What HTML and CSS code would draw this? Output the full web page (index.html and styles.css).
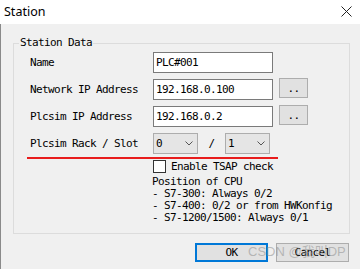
FILE: index.html
```html
<!DOCTYPE html>
<html lang="en">
<head>
  <meta charset="UTF-8">
  <title>Station</title>
  <link rel="stylesheet" href="styles.css">
</head>
<body>

  <!-- Window title bar -->
  <div class="titlebar">
    <span class="title">Station</span>
    <svg class="close" width="11" height="11" viewBox="0 0 11 11">
      <path d="M0.5 0.5 L10.5 10.5 M10.5 0.5 L0.5 10.5" stroke="#222" stroke-width="1" fill="none"/>
    </svg>
  </div>

  <!-- Dialog body -->
  <div class="dialog">
    <div class="group">
      <span class="legend">Station Data</span>

      <div class="form">
        <div class="label">Name</div>
        <div class="field">PLC#001</div>
        <div></div>

        <div class="label">Network IP Address</div>
        <div class="field">192.168.0.100</div>
        <div class="btn small">..</div>

        <div class="label">Plcsim IP Address</div>
        <div class="field">192.168.0.2</div>
        <div class="btn small">..</div>

        <div class="label">Plcsim Rack / Slot</div>
        <div class="rack">
          <div class="combo"><span>0</span><svg width="8" height="5" viewBox="0 0 8 5"><path d="M0.5 0.5 L4 4 L7.5 0.5" stroke="#555" fill="none"/></svg></div>
          <span class="slash">/</span>
          <div class="combo"><span>1</span><svg width="8" height="5" viewBox="0 0 8 5"><path d="M0.5 0.5 L4 4 L7.5 0.5" stroke="#555" fill="none"/></svg></div>
        </div>
      </div>

      <!-- annotation underline -->
      <div class="redline"></div>

      <div class="check-row">
        <span class="checkbox"></span>
        <span>Enable TSAP check</span>
      </div>

      <div class="notes">
        <div>Position of CPU</div>
        <div>- S7-300: Always 0/2</div>
        <div>- S7-400: 0/2 or from HWKonfig</div>
        <div>- S7-1200/1500: Always 0/1</div>
      </div>
    </div>

    <div class="actions">
      <div class="btn default">OK</div>
      <div class="btn">Cancel</div>
    </div>

    <span class="watermark">CSDN @我叫DP</span>
  </div>

</body>
</html>
```

FILE: styles.css
```css
/* Classic Win dialog look */
body {
  margin: 0;
  width: 360px;
  height: 269px;
  overflow: hidden;
  background: #f0f0f0;
  font-family: "DejaVu Sans Mono", "Liberation Mono", monospace;
  font-size: 11px;
  letter-spacing: -0.62px;
  color: #000;
}
.titlebar {
  height: 24px;
  background: #fff;
  display: flex;
  align-items: center;
  justify-content: space-between;
  padding: 0 8px 0 4px;
}
.title {
  font-family: "Noto Sans", "Liberation Sans", sans-serif;
  font-size: 12.5px;
  letter-spacing: 0;
  margin-top: -1px;
}
.close {
  display: block;
  margin-top: -2px;
}
.dialog {
  position: relative;
  box-sizing: border-box;
  height: 245px;
  padding-top: 19px;
  border-left: 1px solid #8a8a8a;
}
.group {
  position: relative;
  box-sizing: border-box;
  width: 337px;
  height: 191px;
  margin-left: 12px;
  border: 1px solid #dcdcdc;
  padding: 8px 0 0 16px;
}
.legend {
  position: absolute;
  top: -7px;
  left: 5px;
  padding: 0 1px;
  line-height: 12px;
  background: #f0f0f0;
}
.form {
  display: grid;
  grid-template-columns: 117px 120px 29px;
  grid-auto-rows: 21px;
  column-gap: 6px;
  row-gap: 6px;
}
.label {
  display: flex;
  align-items: center;
}
.field {
  box-sizing: border-box;
  background: #fff;
  border: 1px solid #7a7a7a;
  padding: 0 2px;
  display: flex;
  align-items: center;
}
.btn {
  box-sizing: border-box;
  background: #e1e1e1;
  border: 1px solid #adadad;
  display: flex;
  align-items: center;
  justify-content: center;
}
.btn.small {
  height: 20px;
  margin-top: -1px;
  padding-top: 1px;
}
.rack {
  grid-column: 2 / 4;
  display: flex;
  align-items: center;
  margin-top: -1px;
}
.combo {
  box-sizing: border-box;
  width: 45px;
  height: 21px;
  background: #e5e5e5;
  border: 1px solid #adadad;
  display: flex;
  align-items: center;
  justify-content: space-between;
  padding: 0 4px 0 2px;
}
.combo svg {
  display: block;
}
.slash {
  width: 27px;
  text-align: center;
}
.redline {
  width: 251px;
  height: 2px;
  margin: 3px 0 0 -3px;
  background: #e81c1c;
}
.check-row {
  display: flex;
  align-items: center;
  gap: 5px;
  margin: 1px 0 0 123px;
  height: 13px;
}
.checkbox {
  box-sizing: border-box;
  width: 13px;
  height: 13px;
  background: #fff;
  border: 1px solid #333;
}
.notes {
  margin: 3px 0 0 122px;
  line-height: 12px;
}
.actions {
  display: flex;
  justify-content: flex-end;
  gap: 8px;
  margin: 9px 11px 0 0;
}
.actions .btn {
  width: 73px;
  height: 19px;
}
.btn.default {
  border: 2px solid #0078d7;
}
.watermark {
  position: absolute;
  left: 247px;
  top: 220px;
  font-family: "Liberation Sans", "Noto Sans CJK SC", sans-serif;
  font-size: 13px;
  line-height: 16px;
  letter-spacing: 0;
  color: rgba(150, 150, 150, 0.6);
}
```
